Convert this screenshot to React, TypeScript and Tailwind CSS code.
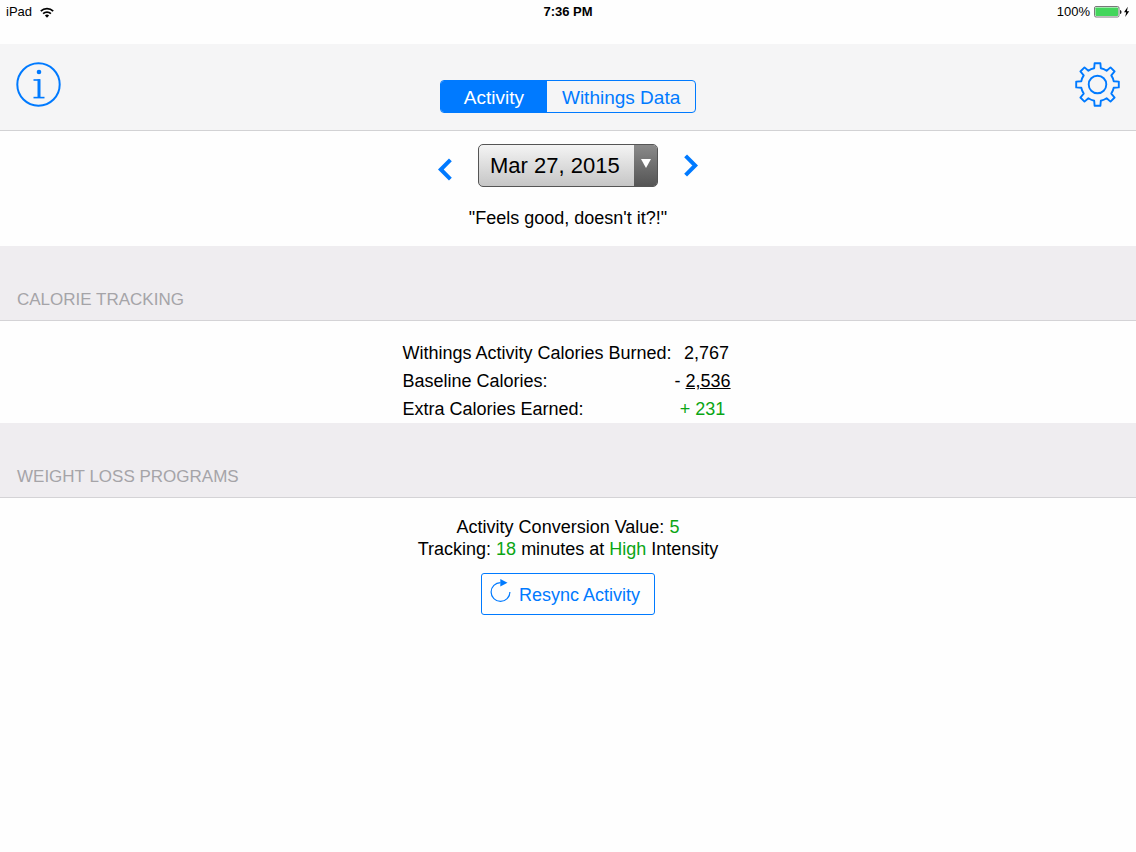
import { useState } from "react";

const TABS = ["Activity", "Withings Data"];
const DATES = ["Mar 26, 2015", "Mar 27, 2015", "Mar 28, 2015"];

// Outline of the eight-tooth gear, centred on 0,0
function gearPath() {
  const points: string[] = [];
  for (let i = 0; i < 8; i++) {
    const a = (i * Math.PI) / 4;
    const at = (x: number, y: number) =>
      `${(x * Math.cos(a) - y * Math.sin(a)).toFixed(2)} ${(x * Math.sin(a) + y * Math.cos(a)).toFixed(2)}`;
    points.push(
      `${i === 0 ? "M" : "A16.5 16.5 0 0 1 "}${at(-3.3, -16.2)}`,
      `L${at(-2.9, -21.3)}L${at(2.9, -21.3)}L${at(3.3, -16.2)}`,
    );
  }
  return points.join("") + "A16.5 16.5 0 0 1 -3.3 -16.2Z";
}

function InfoIcon() {
  return (
    <svg
      className="h-[45px] w-[45px]"
      viewBox="0 0 45 45"
      fill="none"
      stroke="currentColor"
    >
      <circle cx="22.5" cy="22.5" r="21.2" strokeWidth="2" />
      <circle cx="23" cy="10" r="2.3" fill="currentColor" stroke="none" />
      <path d="M17.5 18H24" strokeWidth="1.6" />
      <path d="M23 17.2V35.5" strokeWidth="3" />
      <path d="M17.5 35.6H28.5" strokeWidth="1.6" />
    </svg>
  );
}

function GearIcon() {
  return (
    <svg
      className="h-[45px] w-[45px]"
      viewBox="-22.5 -22.5 45 45"
      fill="none"
      stroke="currentColor"
      strokeWidth="1.9"
    >
      <path d={gearPath()} strokeLinejoin="round" />
      <circle r="8.8" />
    </svg>
  );
}

function WifiIcon() {
  return (
    <svg
      className="h-[11px] w-[14px]"
      viewBox="0 0 14 11"
      fill="none"
      stroke="currentColor"
      strokeWidth="1.7"
    >
      <path d="M0.8 4.2A8.8 8.8 0 0 1 13.2 4.2" />
      <path d="M3.1 6.7A5.6 5.6 0 0 1 10.9 6.7" />
      <path d="M4.9 8.6A3 3 0 0 1 9.1 8.6L7 10.7Z" fill="currentColor" stroke="none" />
    </svg>
  );
}

function BatteryIcon() {
  return (
    <svg className="h-3 w-9" viewBox="0 0 36 12">
      <rect x="0.5" y="0.5" width="24.5" height="10.5" rx="1.5" fill="#fff" stroke="#555" strokeWidth="0.8" />
      <rect x="1.4" y="1.4" width="22.7" height="8.7" rx="0.8" fill="#43d65c" />
      <path d="M26 4C28 4 28 8 26 8Z" fill="#222" />
      <path d="M33.8 0.8L30 6.3H32.2L31.2 11L35.2 5.2H32.9Z" fill="#000" />
    </svg>
  );
}

function Chevron({ direction }: { direction: "left" | "right" }) {
  return (
    <svg
      className="h-[23px] w-3.5"
      viewBox="0 0 14 23"
      fill="none"
      stroke="currentColor"
      strokeWidth="4"
    >
      <path
        d={
          direction === "left"
            ? "M12.4 1.8L2.8 11.5L12.4 21.2"
            : "M1.6 1.8L11.2 11.5L1.6 21.2"
        }
      />
    </svg>
  );
}

function ResyncIcon() {
  return (
    <svg className="h-6 w-[21px]" viewBox="0 0 21 24" fill="none">
      <path
        d="M10.5 3.6A9.4 9.4 0 1 0 19.9 13"
        stroke="currentColor"
        strokeWidth="1.2"
      />
      <path d="M10.3 0L17.5 3.8L10.3 7.6Z" fill="currentColor" />
    </svg>
  );
}

function SectionHeading({ children }: { children: string }) {
  return (
    <h2 className="border-b border-[#d4d3d6] bg-[#efedf0] px-[17px] pt-[43px] pb-[9px] text-[17px] leading-[22px] text-[#a5a4a8]">
      {children}
    </h2>
  );
}

export default function App() {
  const [tab, setTab] = useState(TABS[0]);
  const [date, setDate] = useState(DATES[1]);

  const step = (by: number) => {
    const next = DATES[DATES.indexOf(date) + by];
    if (next) setDate(next);
  };

  return (
    <div className="min-h-screen bg-[#fefefe] font-['Liberation_Sans',Arial,sans-serif] text-lg text-black">
      <div className="grid h-11 grid-cols-3 items-start px-1.5 pt-1 text-[13px] leading-4">
        <div className="flex items-center gap-2">
          iPad <WifiIcon />
        </div>
        <div className="text-center font-bold">7:36 PM</div>
        <div className="flex items-center justify-end gap-1">
          100% <BatteryIcon />
        </div>
      </div>

      <header className="flex items-start justify-between border-b border-[#d2d2d4] bg-[#f5f5f6] px-4 pt-[18px] pb-[17px] text-[#007aff]">
        <button type="button" aria-label="Info">
          <InfoIcon />
        </button>
        <div className="mt-[18px] flex h-[33px] overflow-hidden rounded border border-[#007aff] text-[19px]">
          {TABS.map((name) => (
            <button
              key={name}
              type="button"
              aria-pressed={tab === name}
              onClick={() => setTab(name)}
              className={
                tab === name
                  ? "bg-[#007aff] px-[23px] pt-0.5 text-white"
                  : "px-[15px] pt-0.5 text-[#007aff]"
              }
            >
              {name}
            </button>
          ))}
        </div>
        <button type="button" aria-label="Settings">
          <GearIcon />
        </button>
      </header>

      <section className="pt-[13px] pb-4">
        <div className="flex items-center justify-center gap-[26px] text-[#007aff]">
          <button
            type="button"
            aria-label="Previous day"
            className="mt-2"
            onClick={() => step(-1)}
          >
            <Chevron direction="left" />
          </button>
          <div className="relative">
            <select
              aria-label="Date"
              value={date}
              onChange={(e) => setDate(e.target.value)}
              className="h-[43px] w-[180px] appearance-none rounded-[5px] border border-[#555] bg-linear-to-b from-[#f4f4f4] to-[#c6c6c6] pt-0.5 pl-[11px] text-[22px] text-black"
            >
              {DATES.map((d) => (
                <option key={d}>{d}</option>
              ))}
            </select>
            <span className="pointer-events-none absolute inset-y-px right-px flex w-[23px] justify-center rounded-r bg-linear-to-b from-[#8a8a8a] to-[#555] pt-3.5">
              <svg className="h-[9px] w-2.5" viewBox="0 0 10 9">
                <path d="M0 0H10L5 9Z" fill="#fff" />
              </svg>
            </span>
          </div>
          <button type="button" aria-label="Next day" onClick={() => step(1)}>
            <Chevron direction="right" />
          </button>
        </div>
        <p className="mt-[19px] text-center leading-6">
          "Feels good, doesn't it?!"
        </p>
      </section>

      <SectionHeading>CALORIE TRACKING</SectionHeading>
      <section className="pt-[18px]">
        <table className="mx-auto leading-7">
          <tbody>
            <tr>
              <th className="p-0 text-left font-normal">
                Withings Activity Calories Burned:
              </th>
              <td className="w-[62px] p-0 pl-2 text-center">2,767</td>
            </tr>
            <tr>
              <th className="p-0 text-left font-normal">Baseline Calories:</th>
              <td className="w-[62px] p-0 text-center">
                - <span className="underline">2,536</span>
              </td>
            </tr>
            <tr>
              <th className="p-0 text-left font-normal">
                Extra Calories Earned:
              </th>
              <td className="w-[62px] p-0 text-center text-[#0aa514]">+ 231</td>
            </tr>
          </tbody>
        </table>
      </section>

      <SectionHeading>WEIGHT LOSS PROGRAMS</SectionHeading>
      <section className="flex flex-col items-center pt-[18px] text-center leading-[22px]">
        <p>
          Activity Conversion Value: <span className="text-[#0aa514]">5</span>
        </p>
        <p>
          Tracking: <span className="text-[#0aa514]">18</span> minutes at{" "}
          <span className="text-[#0aa514]">High</span> Intensity
        </p>
        <button
          type="button"
          className="mt-[13px] flex h-[42px] items-center gap-2 rounded-[3px] border border-[#007aff] pt-0.5 pr-3.5 pl-2 text-[#007aff]"
        >
          <span className="pb-2">
            <ResyncIcon />
          </span>
          Resync Activity
        </button>
      </section>
    </div>
  );
}
